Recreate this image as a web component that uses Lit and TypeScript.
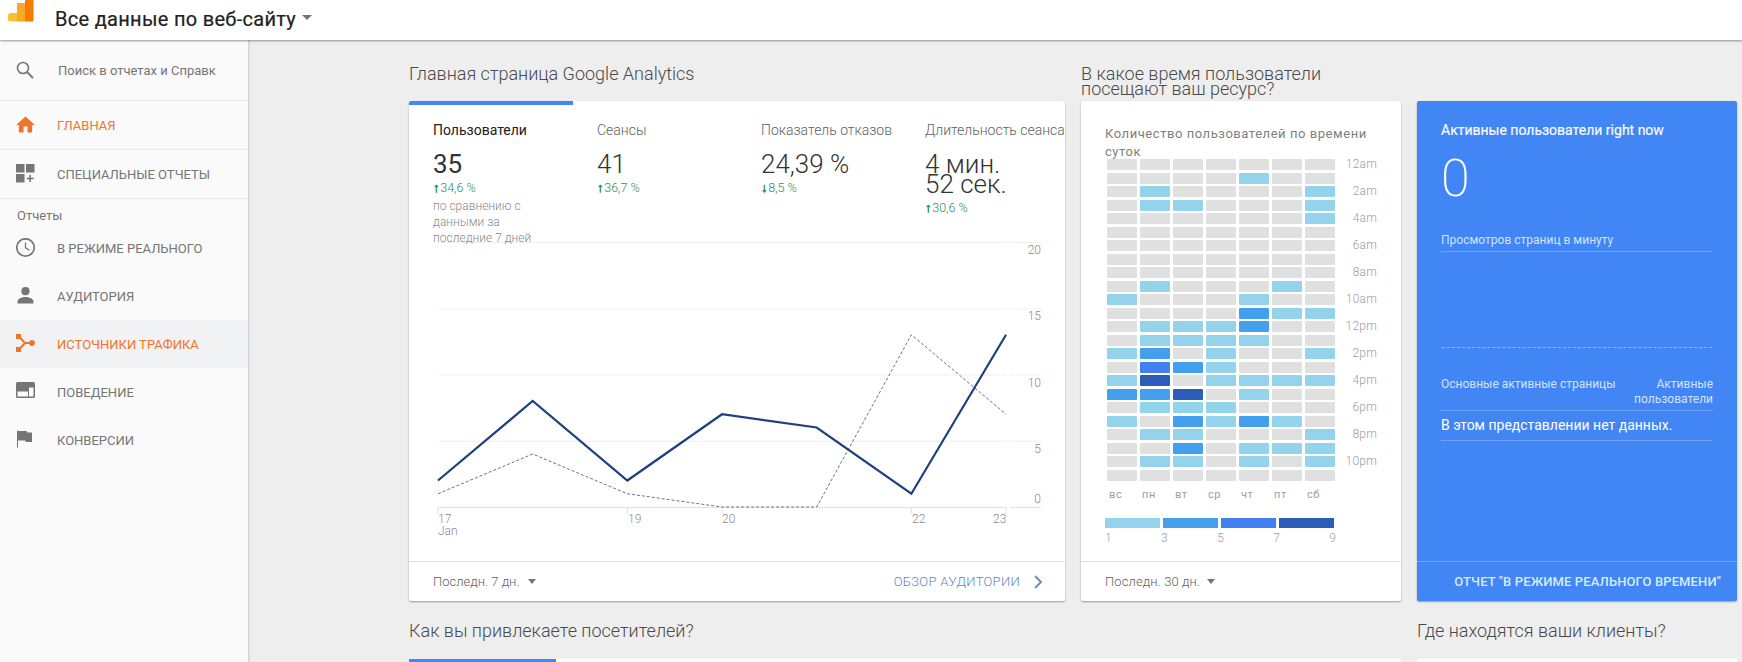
import { LitElement, html, css, svg } from "lit";
import { customElement } from "lit/decorators.js";

const HOURS = [
  "12am", "", "2am", "", "4am", "", "6am", "", "8am", "", "10am", "",
  "12pm", "", "2pm", "", "4pm", "", "6pm", "", "8pm", "", "10pm", "",
];
const HEAT = [
  "0000000", "0000100", "0100001", "0110001", "0000001", "0000000",
  "0000000", "0000000", "0000000", "0100010", "1000100", "0000211",
  "0111200", "0111100", "1201001", "0321000", "1401111", "2240100",
  "0111000", "1021210", "0110001", "0020111", "0110101", "0000000",
];
const DAYS = ["вс", "пн", "вт", "ср", "чт", "пт", "сб"];
const SOLID = [2, 8, 2, 7, 6, 1, 13];
const DASHED = [1, 4, 1, 0, 0, 13, 7];
const px = (i: number) => 29 + i * 94.67;
const py = (v: number) => 265 - v * 13.25;
const pts = (a: number[]) => a.map((v, i) => `${px(i)},${py(v)}`).join(" ");

const icons: Record<string, unknown> = {
  home: svg`<path d="M7.5 17.5v-6h4v6h4.6v-7.6H19L9.5 1.5 0 9.9h2.9v7.6z"/>`,
  custom: svg`<path d="M0 0h8.500v8.500H0zM10 0h8.500v8.500H10zM0 10h8.500v8.500H0zM13.300 11h1.600v2.700h2.800v1.500h-2.800V18h-1.600v-2.800h-2.700v-1.500h2.700z"/>`,
  clock: svg`<circle cx="9.500" cy="9.500" r="8.700" fill="none" stroke="currentColor" stroke-width="1.700"/><path d="M9.500 4.500v5.300l4 2.400" fill="none" stroke="currentColor" stroke-width="1.300"/>`,
  person: svg`<circle cx="9.500" cy="5.200" r="4.100"/><path d="M1.500 17.500v-2.100c0-2.900 5.300-4.400 8-4.400s8 1.500 8 4.400v2.100z"/>`,
  source: svg`<path d="M0 0h5v5H0zM0 13h5v5H0z"/><circle cx="16" cy="9" r="2.900"/><path d="M4 3.500 9 9l-5 5.500M9 9h6" fill="none" stroke="currentColor" stroke-width="2"/>`,
  behavior: svg`<path fill-rule="evenodd" d="M1.500 0h16A1.500 1.500 0 0 1 19 1.500v13a1.500 1.500 0 0 1-1.500 1.500h-16A1.500 1.500 0 0 1 0 14.500v-13A1.500 1.500 0 0 1 1.500 0zM1.500 5v9.500h10.500V9.500H1.500zM13 5.500v9h4.500v-9z"/>`,
  flag: svg`<path d="M1 0.500h1v17H1zM2 1h8.500l1 1.500H16v9.500h-6l-1-1.500H2z"/>`,
};

@customElement("heat-card")
class HeatCard extends LitElement {
  static styles = css`
    :host { display: flex; flex-direction: column; height: 500px; background: #fff; border-radius: 2px; box-shadow: 0 1px 2px rgba(0,0,0,.35); font-family: Roboto, sans-serif; }
    .body { flex: 1; padding: 24px 0 0 24px; }
    .title { font-size: 13px; line-height: 18px; height: 36px; width: 280px; color: #808080; letter-spacing: .55px; margin-bottom: -2px; }
    .grid { display: grid; grid-template-columns: repeat(7, 30px) 39px; column-gap: 3px; grid-auto-rows: 11px; row-gap: 2.500px; margin-left: 2px; }
    .c { border-radius: 1px; }
    .l0 { background: #e0e0e0; } .l1 { background: #93d3ec; } .l2 { background: #42a0ee; } .l3 { background: #4081ef; } .l4 { background: #2c5cba; }
    .hour { font-size: 12px; line-height: 11px; color: #9e9e9e; text-align: right; font-weight: 300; letter-spacing: .2px; }
    .days { display: grid; grid-template-columns: repeat(7, 30px); column-gap: 3px; margin: 7px 0 0 4px; font-size: 11px; line-height: 14px; color: #9e9e9e; letter-spacing: .6px; }
    .legend { display: flex; gap: 3px; margin-top: 16px; }
    .legend i { display: block; width: 55px; height: 10px; }
    .scale { display: flex; justify-content: space-between; width: 231px; font-size: 12px; font-weight: 300; color: #9e9e9e; line-height: 14px; margin-top: 3px; }
    .foot { height: 40px; border-top: 1px solid #e0e0e0; padding-left: 24px; display: flex; align-items: center; font-size: 13px; letter-spacing: .1px; font-weight: 300; color: #616161; gap: 7px; box-sizing: border-box; }
    .caret { width: 0; height: 0; border: 4.500px solid transparent; border-top: 5px solid #757575; border-bottom: 0; }
  `;
  render() {
    return html`<div class="body">
        <div class="title">Количество пользователей по времени суток</div>
        <div class="grid">
          ${HEAT.map((r, i) => html`${[...r].map((v) => html`<div class="c l${v}"></div>`)}<div class="hour">${HOURS[i]}</div>`)}
        </div>
        <div class="days">${DAYS.map((d) => html`<span>${d}</span>`)}</div>
        <div class="legend">${[1, 2, 3, 4].map((l) => html`<i class="l${l}"></i>`)}</div>
        <div class="scale">${[1, 3, 5, 7, 9].map((n) => html`<span>${n}</span>`)}</div>
      </div>
      <div class="foot">Последн. 30 дн. <span class="caret"></span></div>`;
  }
}

@customElement("app-root")
class AppRoot extends LitElement {
  static styles = css`
    :host { display: block; height: 662px; width: 1742px; overflow: hidden; background: #eee; font-family: Roboto, sans-serif; color: #333; }
    header { height: 40px; background: #fff; box-shadow: 0 1px 2px rgba(0,0,0,.4); display: flex; align-items: center; position: relative; z-index: 2; padding: 0 0 2px 8px; box-sizing: border-box; overflow: hidden; }
    .logo { width: 26px; height: 38px; margin-right: 21px; flex: none; }
    .acct { font-size: 20px; font-weight: 400; color: #212121; letter-spacing: .3px; -webkit-text-stroke: .2px #212121; }
    .hcaret { width: 0; height: 0; border: 5px solid transparent; border-top: 5px solid #757575; border-bottom: 0; margin: 0 0 3px 6px; }
    .wrap { display: flex; height: 622px; }
    aside { width: 248px; flex: none; background: #fafafa; border-right: 1px solid #d6d6d6; box-shadow: 1px 0 1px rgba(0,0,0,.06); }
    .search { height: 61px; border-bottom: 1px solid #e4e4e4; display: flex; align-items: center; padding-left: 16px; font-size: 13px; color: #757575; box-sizing: border-box; }
    .search svg { width: 18px; height: 18px; margin-right: 24px; flex: none; }
    .search span { white-space: nowrap; }
    .item { height: 48px; display: flex; align-items: center; padding-left: 16px; font-size: 13px; color: #757575; box-sizing: border-box; }
    .item.line { height: 49px; border-bottom: 1px solid #e4e4e4; }
    .item.on { color: #f0742a; }
    .item.hl { background: #f1f2f3; }
    .item svg { width: 20px; height: 20px; margin-right: 21px; fill: currentColor; flex: none; }
    .sec { height: 25px; padding: 9px 0 0 17px; box-sizing: border-box; font-size: 13px; line-height: 15px; color: #757575; }
    main { flex: 1; padding: 0 0 0 160px; display: grid; grid-template-columns: 656px 320px 320px; column-gap: 16px; grid-template-rows: 61px 500px 58px 10px; align-content: start; }
    h2 { margin: 0; align-self: start; font-size: 18px; font-weight: 300; color: #4a4a4a; line-height: 24px; }
    .h1 { padding-top: 22px; }
    .hm { padding-top: 26px; line-height: 15px; font-size: 18px; }
    .row2 { padding-top: 18px; }
    .card { background: #fff; border-radius: 2px; box-shadow: 0 1px 2px rgba(0,0,0,.35); display: flex; flex-direction: column; overflow: hidden; }
    .tabs { display: grid; grid-template-columns: repeat(4, 164px); height: 141px; position: relative; }
    .tab { padding: 0 0 0 24px; border-top: 4px solid transparent; box-sizing: border-box; }
    .tab.on { border-top-color: #4285f4; }
    .lbl { font-size: 14px; font-weight: 300; color: #616161; line-height: 16px; margin-top: 17px; white-space: nowrap; }
    .tab.on .lbl { font-weight: 400; color: #212121; }
    .val { font-size: 26px; color: #333; line-height: 20px; margin-top: 16px; width: 110px; font-weight: 300; white-space: pre-line; }
    .tab.on .val { font-weight: 400; }
    .delta { font-size: 12.500px; color: #2a8f68; font-weight: 300; line-height: 14px; margin-top: 7px; }
    .ar { -webkit-text-stroke: .6px #2a8f68; margin-right: 1px; }
    .note { font-size: 12px; color: #8a8a8a; font-weight: 300; line-height: 16px; margin-top: 3px; width: 110px; }
    .chart { display: block; width: 656px; height: 319px; }
    .foot { height: 40px; flex: none; box-sizing: border-box; border-top: 1px solid #e0e0e0; display: flex; align-items: center; padding: 0 22px 0 24px; justify-content: space-between; font-size: 13px; color: #616161; font-weight: 300; }
    .per { display: flex; align-items: center; gap: 8px; }
    .caret { width: 0; height: 0; border: 4.500px solid transparent; border-top: 5px solid #757575; border-bottom: 0; }
    .more { display: flex; align-items: center; gap: 13px; color: #5f86c4; letter-spacing: .3px; font-size: 13px; font-weight: 300; }
    .more svg { width: 10px; height: 14px; }
    .blue { background: #4285f4; color: #fff; border-radius: 2px; box-shadow: 0 1px 2px rgba(0,0,0,.35); display: flex; flex-direction: column; height: 500px; font-size: 13px; box-sizing: border-box; }
    .bb { flex: 1; padding: 21px 24px 0; }
    .bt { font-size: 14px; line-height: 16px; color: #f4f8ff; font-weight: 400; -webkit-text-stroke: .2px #fff; }
    .big { font-size: 52px; font-weight: 200; line-height: 60px; margin-top: 11px; }
    .sub { color: #d3e3fd; font-size: 12px; line-height: 15px; }
    .b1 { margin-top: 24px; padding-bottom: 3px; border-bottom: 1px solid #6ea2f7; }
    .spark { height: 95px; border-bottom: 1px dashed #8fb6f9; margin: 0 1px; }
    .cols { display: flex; justify-content: space-between; margin-top: 29px; padding-bottom: 3px; border-bottom: 1px solid #6ea2f7; }
    .cols div:last-child { text-align: right; width: 90px; }
    .none { font-size: 14px; line-height: 29px; border-bottom: 1px solid #6ea2f7; color: #fff; font-weight: 400; }
    .bf { height: 40px; flex: none; box-sizing: border-box; border-top: 1px solid #6ea2f7; display: flex; align-items: center; justify-content: flex-end; padding-right: 16px; font-weight: 500; font-size: 13px; letter-spacing: .12px; color: #d6ecfd; }
    .stub { background: #fff; border-radius: 2px; height: 20px; }
    .stub i { display: block; width: 147px; height: 4px; background: #4285f4; }
    .s1 { grid-column: 1 / span 2; }
  `;
  item(icon: string, label: string, cls = "") {
    return html`<div class="item ${cls}"><svg viewBox="0 0 20 20">${icons[icon]}</svg>${label}</div>`;
  }
  tab(label: string, val: string, arrow: string, d: string, on = false, extra: unknown = "") {
    return html`<div class="tab ${on ? "on" : ""}"><div class="lbl">${label}</div><div class="val">${val}</div><div class="delta"><span class="ar">${arrow}</span>${d}</div>${extra}</div>`;
  }
  render() {
    const grid = [242, 308.300, 374.500, 440.800];
    return html`
      <header>
        <svg class="logo" viewBox="0 0 26 38">
          <path d="M17 0h8.500v21.500H17z" fill="#f57c00"/>
          <path d="M9 3h8v18.500H9z" fill="#ffa726"/>
          <path d="M3 13h6v8.500H2.500A2.500 2.500 0 0 1 0 19v-3a3 3 0 0 1 3-3z" fill="#fbc02d"/>
        </svg>
        <span class="acct">Все данные по веб-сайту</span><span class="hcaret"></span>
      </header>
      <div class="wrap">
        <aside>
          <div class="search">
            <svg viewBox="0 0 18 18" fill="none" stroke="#757575"><circle cx="7" cy="7" r="5.500" stroke-width="1.600"/><path d="M11 11l6 6" stroke-width="1.800"/></svg>
            <span>Поиск в отчетах и Справк</span>
          </div>
          ${this.item("home", "ГЛАВНАЯ", "line on")}
          ${this.item("custom", "СПЕЦИАЛЬНЫЕ ОТЧЕТЫ", "line")}
          <div class="sec">Отчеты</div>
          ${this.item("clock", "В РЕЖИМЕ РЕАЛЬНОГО")}
          ${this.item("person", "АУДИТОРИЯ")}
          ${this.item("source", "ИСТОЧНИКИ ТРАФИКА", "on hl")}
          ${this.item("behavior", "ПОВЕДЕНИЕ")}
          ${this.item("flag", "КОНВЕРСИИ")}
        </aside>
        <main>
          <h2 class="h1">Главная страница Google Analytics</h2>
          <h2 class="hm">В какое время пользователи посещают ваш ресурс?</h2>
          <div></div>
          <section class="card">
            <div class="tabs">
              ${this.tab("Пользователи", "35", "↑", "34,6 %", true, html`<div class="note">по сравнению с данными за последние 7 дней</div>`)}
              ${this.tab("Сеансы", "41", "↑", "36,7 %")}
              ${this.tab("Показатель отказов", "24,39 %", "↓", "8,5 %")}
              ${this.tab("Длительность сеанса", "4 мин.\n52 сек.", "↑", "30,6 %")}
            </div>
            <svg class="chart" viewBox="0 0 656 319">
              ${grid.map((y) => svg`<path d="M29 ${y - 242 + 0.500}H597M601 ${y - 242 + 0.500}H632" stroke="#efefef"/>`)}
              <path d="M29 265.500H597M601 265.500H632" stroke="#e0e0e0"/>
              ${[0, 2, 3, 5, 6].map((i) => svg`<path d="M${px(i)} 265v7" stroke="#e0e0e0"/>`)}
              <polyline points=${pts(DASHED)} fill="none" stroke="#6b7280" stroke-width="1" stroke-dasharray="3 2"/>
              <polyline points=${pts(SOLID)} fill="none" stroke="#1f3f7f" stroke-width="2.200"/>
              <g font-family="Roboto, sans-serif" font-size="12" font-weight="300" fill="#8a8a8a">
                ${[["20", 12], ["15", 78], ["10", 145], ["5", 211], ["0", 261]].map(([t, y]) => svg`<text x="632" y=${y} text-anchor="end">${t}</text>`)}
                <text x="29" y="281">17</text><text x="29" y="293">Jan</text>
                <text x="219" y="281">19</text><text x="313" y="281">20</text>
                <text x="503" y="281">22</text><text x="584" y="281">23</text>
              </g>
            </svg>
            <div class="foot">
              <span class="per">Последн. 7 дн. <span class="caret"></span></span>
              <span class="more">ОБЗОР АУДИТОРИИ
                <svg viewBox="0 0 10 14"><path d="M2 1l6 6-6 6" fill="none" stroke="#6a8fc9" stroke-width="2"/></svg></span>
            </div>
          </section>
          <heat-card></heat-card>
          <section class="blue">
            <div class="bb">
              <div class="bt">Активные пользователи right now</div>
              <div class="big">0</div>
              <div class="sub b1">Просмотров страниц в минуту</div>
              <div class="spark"></div>
              <div class="sub cols"><div>Основные активные страницы</div><div>Активные пользователи</div></div>
              <div class="none">В этом представлении нет данных.</div>
            </div>
            <div class="bf">ОТЧЕТ "В РЕЖИМЕ РЕАЛЬНОГО ВРЕМЕНИ"</div>
          </section>
          <h2 class="row2 s1">Как вы привлекаете посетителей?</h2>
          <h2 class="row2">Где находятся ваши клиенты?</h2>
          <div class="stub s1"><i></i></div>
          <div class="stub"></div>
        </main>
      </div>
    `;
  }
}
